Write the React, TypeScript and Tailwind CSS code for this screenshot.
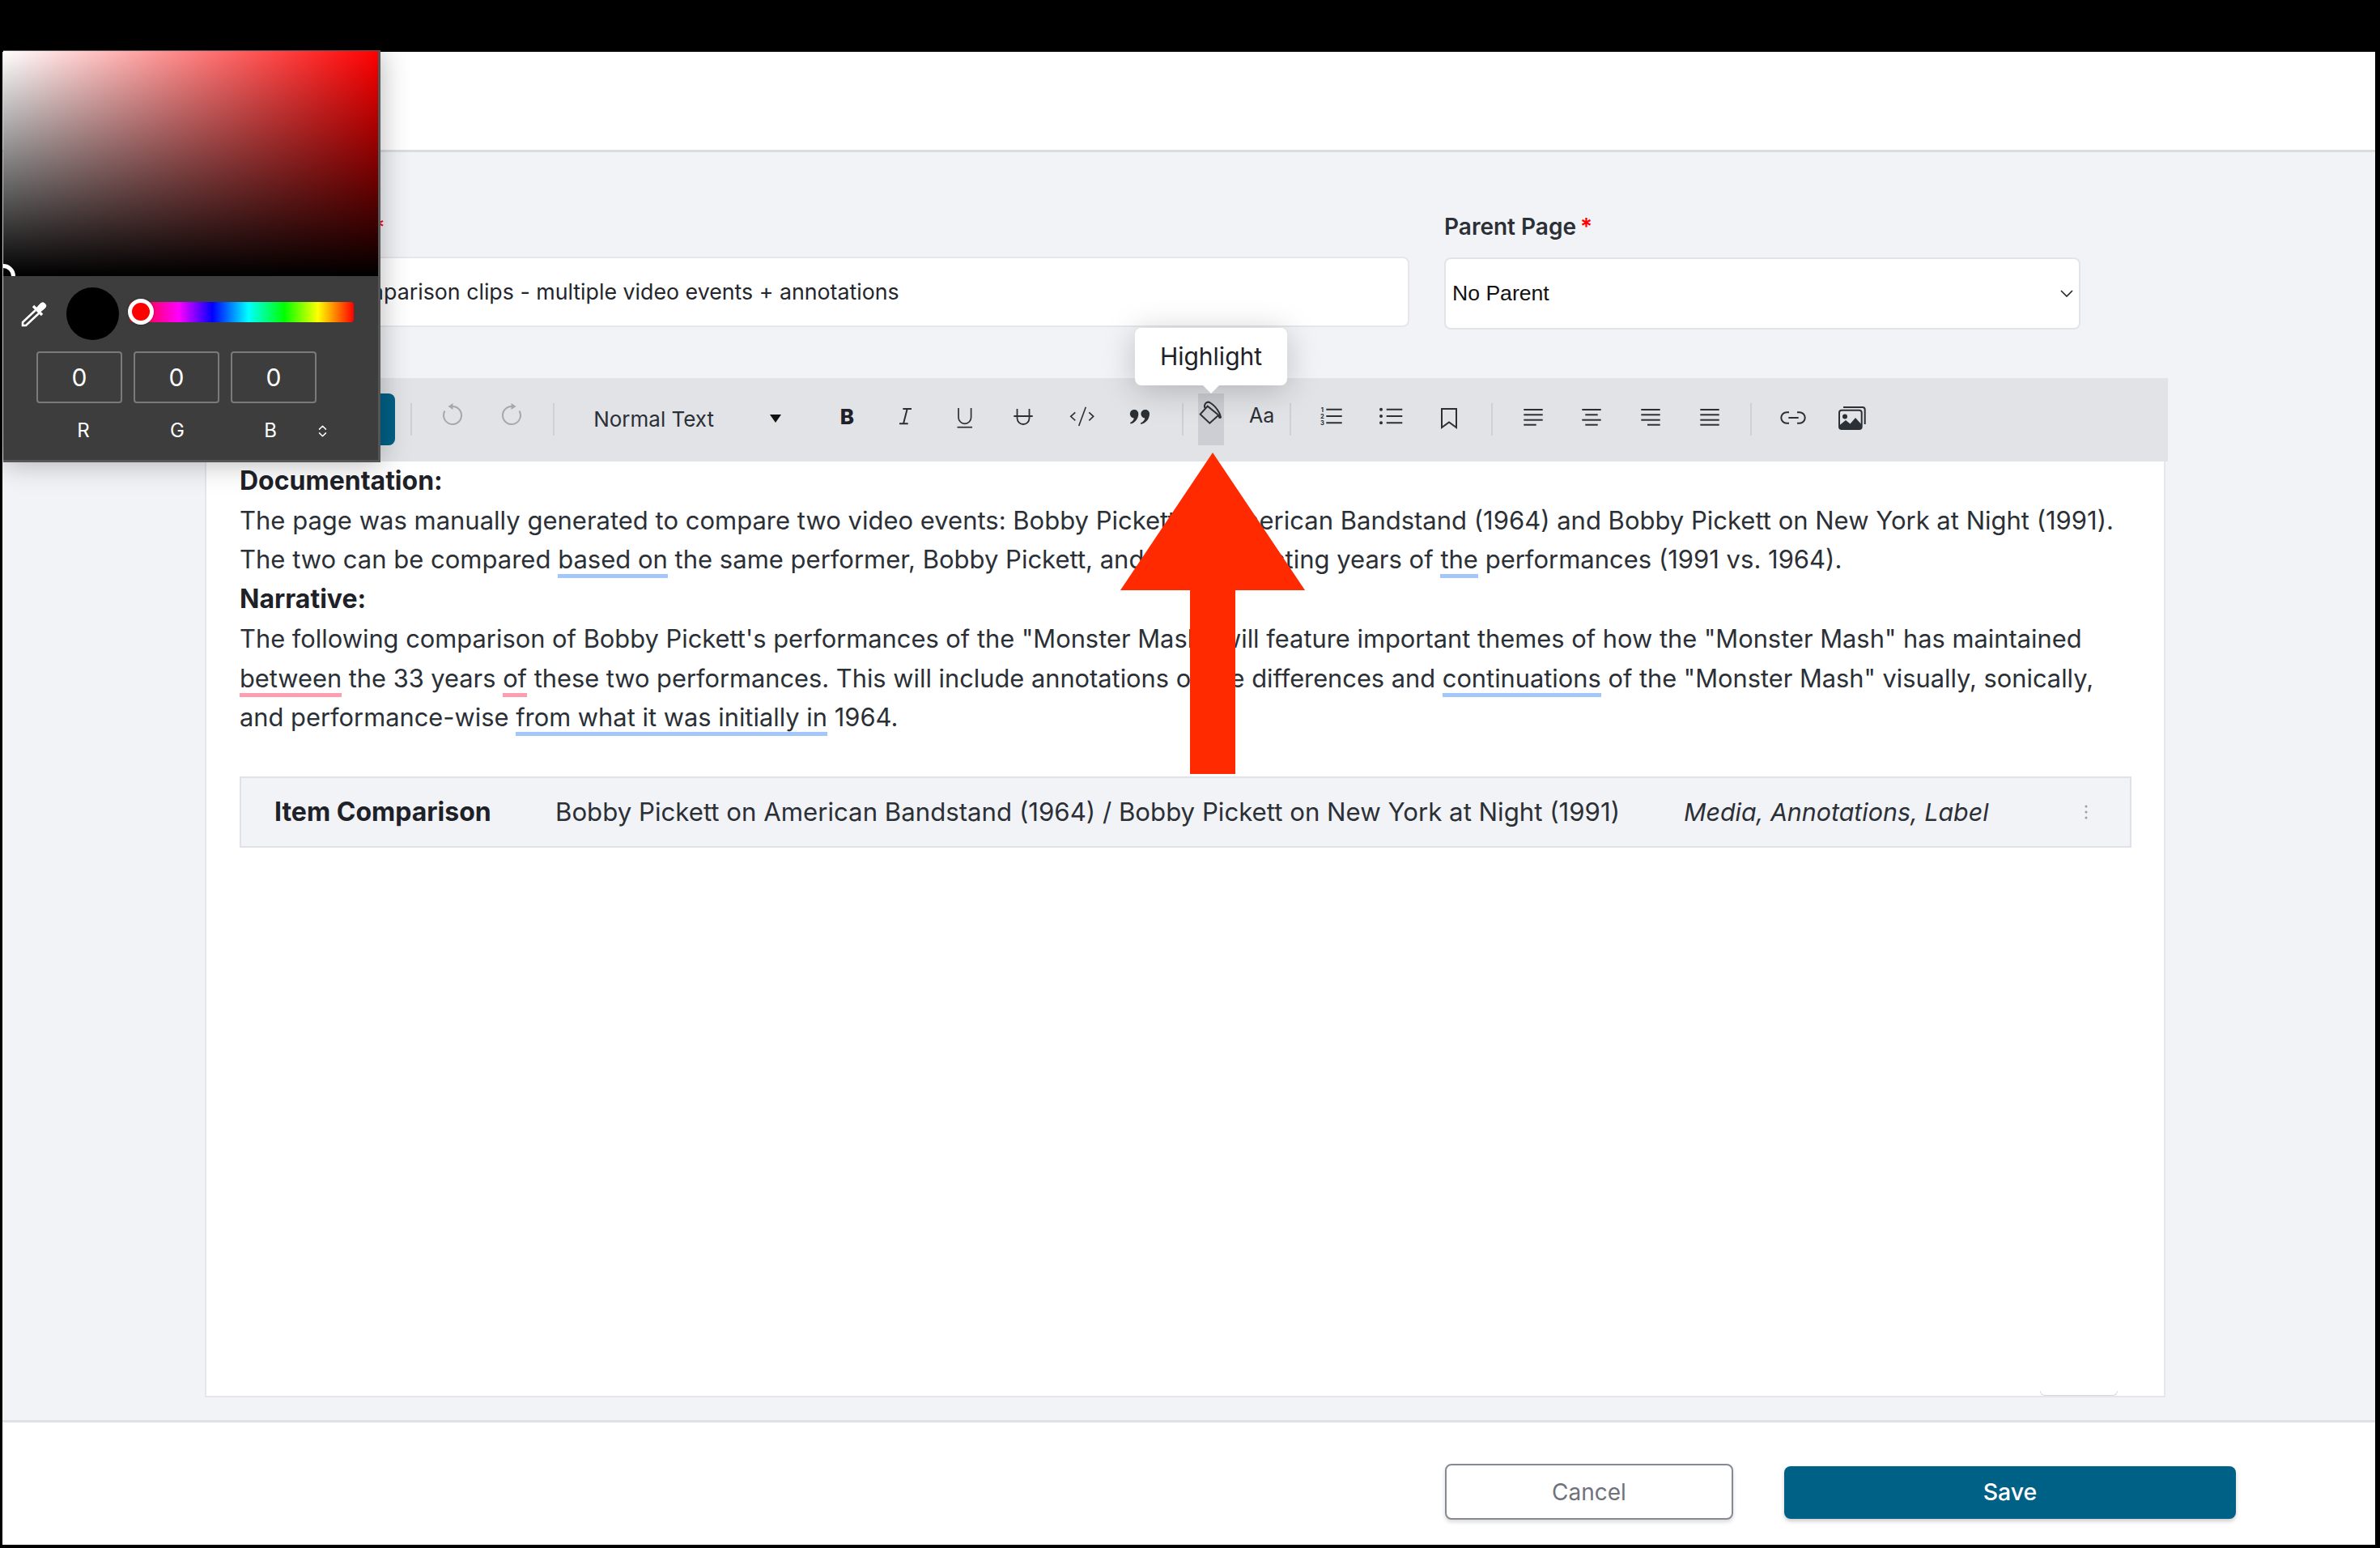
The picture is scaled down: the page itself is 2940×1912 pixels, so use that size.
import { ChevronsUpDown } from "lucide-react";
import type { ReactNode } from "react";

const ink = "#2b2f36";

function Sep({ className }: { className: string }) {
  return <div className={`h-[40px] w-[2px] shrink-0 bg-[#cdd0d6] ${className}`} />;
}

function Glyph({ children }: { children: ReactNode }) {
  return (
    <svg
      width="40"
      height="40"
      viewBox="0 0 40 40"
      fill="none"
      stroke={ink}
      strokeWidth="2"
      className="overflow-visible"
    >
      {children}
    </svg>
  );
}

function Slot({ children, className = "" }: { children: ReactNode; className?: string }) {
  return (
    <div className={`flex h-[64px] w-[72.6px] shrink-0 items-center justify-center ${className}`}>
      {children}
    </div>
  );
}

function Lines({ rows }: { rows: [number, number][] }) {
  const ys = [8, 14.3, 20.7, 26.7];
  return (
    <Glyph>
      {rows.map(([a, b], i) => (
        <line key={i} x1={a} x2={b} y1={ys[i]} y2={ys[i]} />
      ))}
    </Glyph>
  );
}

function Blue({ children }: { children: ReactNode }) {
  return <span className="border-b-[5px] border-[#a3c6fb]">{children}</span>;
}

function Pink({ children }: { children: ReactNode }) {
  return <span className="border-b-[5px] border-[#ff9db0]">{children}</span>;
}

function Toolbar() {
  return (
    <div className="mr-[-3px] flex h-[103px] shrink-0 items-center bg-[#e2e3e7] pb-[1px]">
      <div className="ml-[147px] h-[64px] w-[88px] shrink-0 rounded-[8px] bg-[#006187]" />
      <Sep className="ml-[19px]" />
      <Slot className="ml-[14px]">
        <Glyph>
          <path d="M20 4a11 11 0 1 1-9.500 5.500" stroke="#a4a7ad" />
          <path d="M20.500 0v8l-6-4z" fill="#a4a7ad" stroke="none" />
        </Glyph>
      </Slot>
      <Slot>
        <Glyph>
          <path d="M20 4a11 11 0 1 0 9.500 5.500" stroke="#a4a7ad" />
          <path d="M19.500 0v8l6-4z" fill="#a4a7ad" stroke="none" />
        </Glyph>
      </Slot>
      <Sep className="ml-[15px]" />
      <div className="ml-[48px] flex h-[64px] w-[277px] shrink-0 items-center justify-between pb-[2px] pr-[45px] text-[26px] text-[#2b2f36]">
        <span>Normal Text</span>
        <svg width="14" height="10" viewBox="0 0 14 10">
          <path d="M0 0h14L7 10z" fill="#111" />
        </svg>
      </div>
      <Slot>
        <span className="mb-[8px] text-[26px] font-extrabold text-[#1e2127]">B</span>
      </Slot>
      <Slot>
        <Glyph>
          <path d="M16.300 7H27M12 25.300h10.700M21.700 7 17 25.300" />
        </Glyph>
      </Slot>
      <Slot>
        <Glyph>
          <path d="M12 6v11.500a7.800 7.800 0 0 0 15.600 0V6" strokeWidth="1.700" />
          <path d="M10.500 29.700h18.500" strokeWidth="1.700" />
        </Glyph>
      </Slot>
      <Slot>
        <Glyph>
          <path d="M12.500 7v11.500a7.500 7.500 0 0 0 15 0V7M8.300 16h23.400" strokeWidth="1.800" />
        </Glyph>
      </Slot>
      <Slot>
        <Glyph>
          <path d="m11.300 11.300-5.600 5 5.600 5M24.300 4.700 15.700 28M28.300 11.300l5.400 5-5.400 5" strokeWidth="1.600" />
        </Glyph>
      </Slot>
      <Slot>
        <Glyph>
          <g fill={ink} stroke="none">
            <path d="M12.300 8a5 5 0 0 1 5 5c0 6-4 11.200-9.700 12.600l-.5-1.500c2.600-1.200 4.200-3 4.700-5.600A5.200 5.200 0 0 1 12.300 8z" />
            <path d="M26 8a5 5 0 0 1 5 5c0 6-4 11.600-10.600 13l-.5-1.500c3-1.200 4.900-3.200 5.400-6A5.200 5.200 0 0 1 26 8z" />
          </g>
        </Glyph>
      </Slot>
      <Sep className="ml-[14px]" />
      <div className="ml-[18px] flex h-[64px] w-[32px] shrink-0 items-center justify-center bg-[#cdced3]">
        <Glyph>
          <path d="M6.700 13.700 15.700 3.700 29.300 14.700 18.300 24.700z" />
          <path d="M12.500 6C10.500 1 15-3 19-.5 24 2.500 29 9 31.500 15" />
          <path d="M29 14c2-.5 4 1 4 3a2 2 0 0 1-4 0z" fill={ink} stroke="none" />
        </Glyph>
      </div>
      <div className="ml-[12px] flex h-[64px] w-[70px] shrink-0 items-center justify-center pb-[8px] text-[25px] text-[#2b2f36]">
        Aa
      </div>
      <Sep className="ml-[-1px]" />
      <Slot className="ml-[14px]">
        <Glyph>
          <path d="M13.300 7.700h19.400M13.300 16h19.400M13.300 24.300h19.400" />
          <g fill={ink} stroke="none" fontSize="7.500" fontWeight="700" textAnchor="middle" fontFamily="Inter, sans-serif">
            <text x="8.300" y="10.500">1</text>
            <text x="8.300" y="18.700">2</text>
            <text x="8.300" y="27">3</text>
          </g>
        </Glyph>
      </Slot>
      <Slot>
        <Glyph>
          <path d="M14.700 7.700h19.600M14.700 16h19.600M14.700 24.300h19.600" />
          <g fill={ink} stroke="none">
            <circle cx="8" cy="7.700" r="2" />
            <circle cx="8" cy="16" r="2" />
            <circle cx="8" cy="24.300" r="2" />
          </g>
        </Glyph>
      </Slot>
      <Slot>
        <Glyph>
          <path d="M11 7h18v23l-9-6.500-9 6.500z" />
        </Glyph>
      </Slot>
      <Sep className="ml-[15px]" />
      <Slot className="ml-[14px]">
        <Lines rows={[[8.3, 31.7], [8.3, 31.7], [8.3, 31.7], [8.3, 23.7]]} />
      </Slot>
      <Slot>
        <Lines rows={[[8.3, 31.7], [12.3, 27.7], [8.3, 31.7], [12.3, 27.7]]} />
      </Slot>
      <Slot>
        <Lines rows={[[8.3, 31.7], [8.3, 31.7], [8.3, 31.7], [16, 31.7]]} />
      </Slot>
      <Slot>
        <Lines rows={[[8.3, 31.7], [8.3, 31.7], [8.3, 31.7], [8.3, 31.7]]} />
      </Slot>
      <Sep className="ml-[14px]" />
      <Slot className="ml-[15px]">
        <Glyph>
          <path d="M15 11.300h-3a6.700 6.700 0 0 0 0 13.400h3M25 11.300h3a6.700 6.700 0 0 1 0 13.400h-3M14.300 18h12.400" />
        </Glyph>
      </Slot>
      <Slot>
        <Glyph>
          <rect x="4" y="8.700" width="27.700" height="23.300" rx="3" />
          <path d="M9 5h23.700a3 3 0 0 1 3 3v18" />
          <circle cx="11" cy="16.500" r="3" fill={ink} stroke="none" />
          <path d="M4 27.500 12 21l5.500 4.500L24 18l7.700 8.500V29a3 3 0 0 1-3 3H7a3 3 0 0 1-3-3z" fill={ink} stroke="none" />
        </Glyph>
      </Slot>
    </div>
  );
}

function ColorPicker() {
  return (
    <div className="absolute left-[4px] top-[62px] z-20 flex h-[509px] w-[466px] flex-col overflow-hidden border-t border-r-[3px] border-b-[3px] border-[#555] bg-[#3d3d3d] text-white shadow-[0_0_34px_rgba(0,0,0,0.3)]">
      <div className="relative h-[278px] shrink-0 overflow-hidden bg-[linear-gradient(to_right,#fff,#f00)]">
        <div className="h-full bg-[linear-gradient(to_bottom,transparent,#000)]" />
        <div className="absolute left-[-15px] top-[263px] h-[30px] w-[30px] rounded-full border-[5px] border-white" />
      </div>
      <div className="mt-[14px] flex items-center pl-[20px]">
        <svg width="34" height="34" viewBox="0 0 34 34" fill="none" stroke="#fff" className="shrink-0">
          <path d="M20 12 4 27v4h4l16-15" strokeWidth="2.600" />
          <path d="M17 7 28 18" strokeWidth="3.400" />
          <path d="M21 9.500 26 4a3.800 3.800 0 0 1 5.500 5.500L26 14z" fill="#fff" strokeWidth="1" />
        </svg>
        <div className="ml-[24px] h-[65px] w-[65px] shrink-0 rounded-full bg-black" />
        <div className="relative mb-[4px] ml-[13px] h-[25px] w-[277px] shrink-0 rounded-[4px] bg-[linear-gradient(to_right,#f00_0%,#f0f_22%,#00f_37%,#0ff_53%,#0f0_69%,#ff0_84%,#f00_100%)]">
          <div className="absolute left-[-2px] top-[-4px] h-[32px] w-[32px] rounded-full border-[5px] border-white bg-[#f00] shadow-[0_0_3px_rgba(0,0,0,0.4)]" />
        </div>
      </div>
      <div className="ml-[41px] mt-[14px] flex gap-[14px]">
        {["0", "0", "0"].map((v, i) => (
          <div
            key={i}
            className="flex h-[64px] w-[106px] items-center justify-center rounded-[4px] border-2 border-[#7a7a7a] text-[30px]"
          >
            {v}
          </div>
        ))}
      </div>
      <div className="ml-[41px] mt-[17px] flex items-center text-[24px] leading-[34px]">
        <span className="w-[116px] text-center">R</span>
        <span className="w-[116px] text-center">G</span>
        <span className="w-[114px] text-center">B</span>
        <ChevronsUpDown size={19} strokeWidth={1.8} className="ml-[-2px]" />
      </div>
    </div>
  );
}

export default function App() {
  return (
    <div className="relative h-[1912px] w-[2940px] overflow-hidden bg-black pb-[4px] pl-[3px] pr-[6px] pt-[64px] font-['Inter',sans-serif] text-[#2b2f36]">
      <div className="flex h-full flex-col bg-white">
        <div className="h-[124px] shrink-0 border-b-[3px] border-[#dcdde1]" />

        <div className="flex min-h-0 flex-1 flex-col bg-[#f2f3f7] pb-[28px] pl-[250px] pt-[72px]">
          <div className="flex shrink-0 items-start">
            <div className="w-[1488px] shrink-0">
              <div className="mb-[18px] h-[39px] pl-[208px] text-[28px] text-[#ff0000]">*</div>
              <div className="flex h-[87px] items-center overflow-hidden rounded-[8px] border-2 border-[#e6e7eb] bg-white pl-[160px] text-[26.75px] text-[#23262c]">
                Comparison clips - multiple video events + annotations
              </div>
            </div>
            <div className="ml-[43px] w-[786px] shrink-0">
              <div className="mb-[18px] flex h-[40px] items-center gap-[5px] text-[28px] font-semibold leading-[40px]">
                Parent Page <span className="text-[#ff0000]">*</span>
              </div>
              <div className="flex h-[89px] items-center justify-between rounded-[8px] border-2 border-[#e3e4e9] bg-white pl-[8px] pr-[7px] font-['Liberation_Sans',sans-serif] text-[26.6px] text-[#111]">
                No Parent
                <svg width="16" height="9" viewBox="0 0 16 9" fill="none" stroke="#222" strokeWidth="1.6">
                  <path d="m1 1 7 7 7-7" />
                </svg>
              </div>
            </div>
          </div>

          <div className="mt-[60px] flex min-h-0 w-[2422px] flex-1 flex-col">
            <Toolbar />
            <div className="relative flex-1 border-x-2 border-b-2 border-[#e5e6ea] bg-white pl-[41px] text-[31px] leading-[48.7px]">
              <div className="whitespace-nowrap">
                <div className="text-[32px] font-bold text-[#1e2127]">Documentation:</div>
                <div>
                  The page was manually generated to compare two video events: Bobby Pickett on American Bandstand (1964) and Bobby Pickett on New York at Night (1991).
                </div>
                <div>
                  The two can be compared <Blue>based on</Blue> the same performer, Bobby Pickett, and the contrasting years of <Blue>the</Blue> performances (1991 vs. 1964).
                </div>
                <div className="text-[32px] font-bold text-[#1e2127]">Narrative:</div>
                <div className="text-[30.85px]">
                  The following comparison of Bobby Pickett's performances of the "Monster Mash" will feature important themes of how the "Monster Mash" has maintained
                </div>
                <div className="text-[30.8px]">
                  <Pink>between</Pink> the 33 years <Pink>of</Pink> these two performances. This will include annotations of the differences and <Blue>continuations</Blue> of the "Monster Mash" visually, sonically,
                </div>
                <div className="text-[30.85px]">
                  and performance-wise <Blue>from what it was initially in</Blue> 1964.
                </div>
              </div>
              <div className="mt-[48px] flex h-[88px] w-[2337px] items-center border-2 border-[#dfe2e7] bg-[#f2f3f7] pl-[41px] whitespace-nowrap">
                <span className="w-[347px] shrink-0 text-[32px] font-bold text-[#1e2127]">Item Comparison</span>
                <span className="w-[1394px] shrink-0 text-[31.2px]">
                  Bobby Pickett on American Bandstand (1964) / Bobby Pickett on New York at Night (1991)
                </span>
                <span className="w-[495px] shrink-0 text-[30.4px] italic">Media, Annotations, Label</span>
                <svg width="4" height="18" viewBox="0 0 4 18" fill="#9a9ca3">
                  <circle cx="2" cy="2" r="1.500" />
                  <circle cx="2" cy="9" r="1.500" />
                  <circle cx="2" cy="16" r="1.500" />
                </svg>
              </div>
              <div className="absolute bottom-0 right-[57px] h-[6px] w-[96px] rounded-b-[8px] border-x border-b border-[#d8d9de]" />
            </div>
          </div>
        </div>

        <div className="flex h-[154px] shrink-0 items-start justify-end border-t-[3px] border-[#dfe0e5] pr-[172px] pt-[51px] text-[28px]">
          <button className="h-[69px] w-[356px] rounded-[8px] border-2 border-[#868a94] bg-white text-[#6f727b] shadow-[0_3px_5px_rgba(0,0,0,0.15)]">
            Cancel
          </button>
          <button className="ml-[63px] mt-[3px] h-[65px] w-[558px] rounded-[8px] bg-[#006187] text-[28.5px] font-medium text-white shadow-[0_3px_5px_rgba(0,0,0,0.2)]">
            Save
          </button>
        </div>
      </div>

      <ColorPicker />

      <div className="absolute left-[1402px] top-[405px] z-10 flex h-[71px] w-[188px] items-center justify-center rounded-[8px] bg-white text-[30px] text-[#1e2127] shadow-[0_6px_40px_rgba(0,0,0,0.22)]">
        Highlight
        <div className="absolute left-[84px] top-[71px] h-0 w-0 border-x-[10px] border-t-[10px] border-x-transparent border-t-white" />
      </div>

      <svg width="2940" height="1912" className="pointer-events-none absolute left-0 top-0 z-10">
        <path d="M1498 559 1612 729H1526V956H1470V729H1384z" fill="#ff2a00" />
      </svg>
    </div>
  );
}
